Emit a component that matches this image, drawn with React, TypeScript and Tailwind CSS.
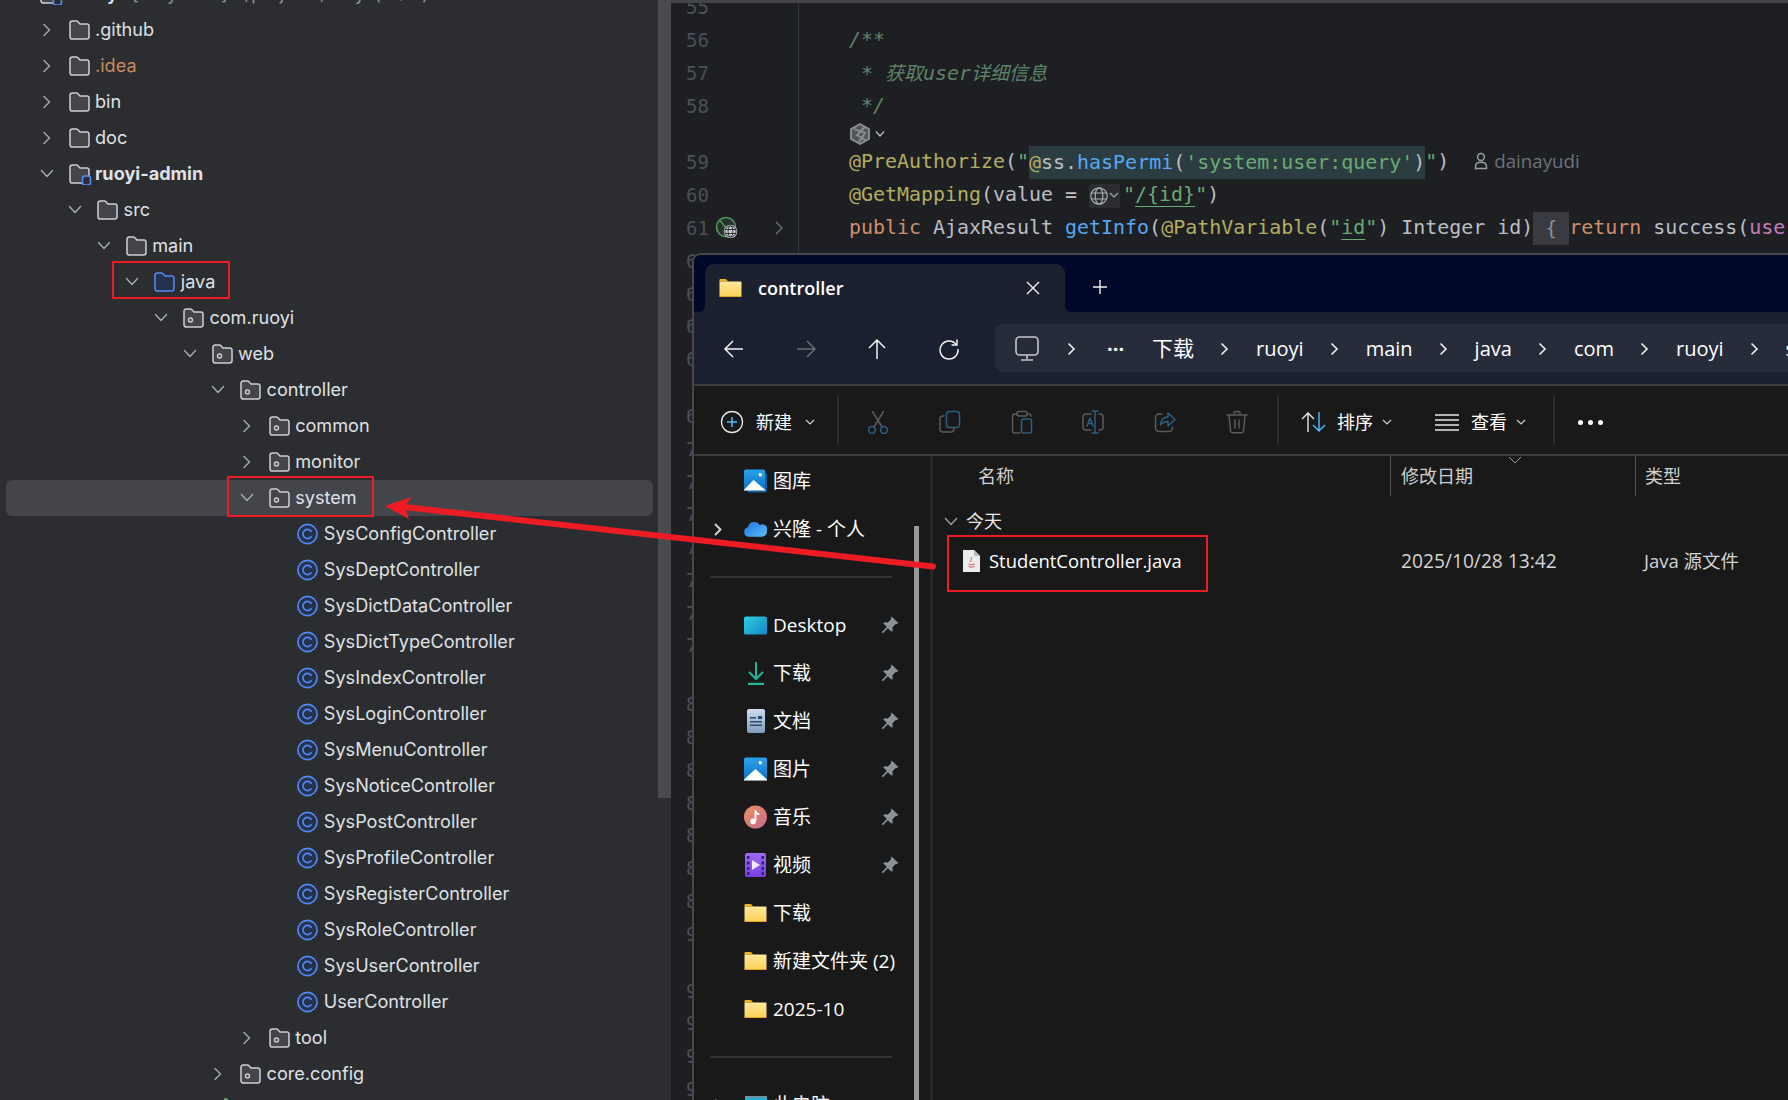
import React from "react";

const UI = "font-['Open_Sans','Noto_Sans_CJK_SC',sans-serif]";

type Kind = "folder" | "module" | "source" | "pkg" | "class" | "boot";
type Row = { name: string; level: number; kind: Kind; open?: boolean; color?: string; bold?: boolean; selected?: boolean };

const classes = [
  "SysConfigController", "SysDeptController", "SysDictDataController", "SysDictTypeController",
  "SysIndexController", "SysLoginController", "SysMenuController", "SysNoticeController",
  "SysPostController", "SysProfileController", "SysRegisterController", "SysRoleController",
  "SysUserController", "UserController",
];

const rows: Row[] = [
  { name: ".github", level: 0, kind: "folder", open: false },
  { name: ".idea", level: 0, kind: "folder", open: false, color: "text-[#c98a5e]" },
  { name: "bin", level: 0, kind: "folder", open: false },
  { name: "doc", level: 0, kind: "folder", open: false },
  { name: "ruoyi-admin", level: 0, kind: "module", open: true, bold: true },
  { name: "src", level: 1, kind: "folder", open: true },
  { name: "main", level: 2, kind: "folder", open: true },
  { name: "java", level: 3, kind: "source", open: true },
  { name: "com.ruoyi", level: 4, kind: "pkg", open: true },
  { name: "web", level: 5, kind: "pkg", open: true },
  { name: "controller", level: 6, kind: "pkg", open: true },
  { name: "common", level: 7, kind: "pkg", open: false },
  { name: "monitor", level: 7, kind: "pkg", open: false },
  { name: "system", level: 7, kind: "pkg", open: true, selected: true },
  ...classes.map((name) => ({ name, level: 8, kind: "class" as Kind })),
  { name: "tool", level: 7, kind: "pkg", open: false },
  { name: "core.config", level: 6, kind: "pkg", open: false },
  { name: "", level: 5, kind: "boot" },
];

const FOLDER = "M3.2 2h4.3c.5 0 .9.2 1.2.5L11 5h6.8A2.2 2.2 0 0 1 20 7.2v10.6a2.2 2.2 0 0 1-2.2 2.2H3.2A2.2 2.2 0 0 1 1 17.8V4.2A2.2 2.2 0 0 1 3.2 2z";

function TreeIcon({ kind }: { kind: Kind }) {
  if (kind === "boot")
    return (
      <svg width="22" height="24" viewBox="0 0 22 24" fill="none">
        <circle cx="9" cy="12" r="9" fill="#25324d" stroke="#548af7" strokeWidth="1.6" />
        <path d="M13 0 21 6v8h-8z" fill="#2b3a2e" stroke="#5fad65" strokeWidth="1.5" />
      </svg>
    );
  if (kind === "class")
    return (
      <svg width="21" height="22" viewBox="0 0 21 22" fill="none">
        <circle cx="10.5" cy="11" r="9.6" fill="#25324d" stroke="#548af7" strokeWidth="1.6" />
        <path d="M14.2 8.2a4.6 4.6 0 1 0 0 5.6" stroke="#548af7" strokeWidth="1.6" strokeLinecap="round" />
      </svg>
    );
  const blue = kind === "source";
  return (
    <svg width="24" height="22" viewBox="0 0 24 22" fill="none">
      <path d={FOLDER} fill={blue ? "#25324d" : "#43454a"} stroke={blue ? "#548af7" : "#ced0d6"} strokeWidth="1.5" />
      {kind === "pkg" && <circle cx="7.5" cy="13" r="2" stroke="#ced0d6" strokeWidth="1.4" />}
      {kind === "module" && <rect x="13.5" y="13" width="8" height="9" rx="2.5" fill="#2b2d30" stroke="#548af7" strokeWidth="1.6" />}
    </svg>
  );
}

function TreeChevron({ open }: { open: boolean }) {
  return (
    <svg width="16" height="14" viewBox="0 0 16 14" fill="none" stroke="#a8abb2" strokeWidth="1.4" strokeLinecap="round" strokeLinejoin="round">
      {open ? <path d="M2.5 3.5 8 9.5l5.5-6" /> : <path d="M5 1.5 10.5 7 5 12.5" />}
    </svg>
  );
}

function TreeRow({ r }: { r: Row }) {
  return (
    <div
      className={`flex h-9 w-[647px] shrink-0 items-center rounded-md ${r.selected ? "bg-[#43454a]" : ""}`}
      style={{ paddingLeft: 32.5 + r.level * 28.6 }}
    >
      <div className="flex w-[16px] justify-center">{r.open !== undefined && <TreeChevron open={r.open} />}</div>
      <div className="ml-[14px] w-[26.5px]"><TreeIcon kind={r.kind} /></div>
      <span className={`whitespace-nowrap text-[18.1px] ${r.bold ? "font-bold" : ""} ${r.color ?? "text-[#dfe1e5]"}`}>{r.name}</span>
    </div>
  );
}

const Y = "text-[#b3ae60]";
const G = "text-[#6aab73]";
const B = "text-[#56a8f5]";
const O = "text-[#cf8e6d]";
const C = "text-[#5f826b]";

function Line({ n, children, extra }: { n?: number; children?: React.ReactNode; extra?: React.ReactNode }) {
  return (
    <div className="flex h-[32.8px] shrink-0 items-center">
      <div className="flex h-full w-[128px] shrink-0 items-center border-r border-[#313438] pl-[15px] text-[19px] text-[#4b5059]">
        <span className="w-[33px]">{n}</span>
        {extra}
      </div>
      <div className="whitespace-pre pl-[50px] text-[#bcbec4]">{children}</div>
    </div>
  );
}

function Spacer({ h, children }: { h: string; children?: React.ReactNode }) {
  return (
    <div className={`flex shrink-0 ${h}`}>
      <div className="h-full w-[128px] shrink-0 border-r border-[#313438]" />
      {children}
    </div>
  );
}

function Editor() {
  const after = [62, 63, 64, 65];
  const b = [69, 70, 71, 72, 73, 74, 75, 76];
  const c = [80, 81, 82, 83, 84, 85, 86, 90];
  const d = [91, 92, 93, 94];
  const Nums = ({ list }: { list: number[] }) => <>{list.map((n) => <Line key={n} n={n} />)}</>;
  return (
    <div className="h-full flex-1 overflow-hidden border-t-[3px] border-[#43454a] bg-[#1e1f22] font-['DejaVu_Sans_Mono','Noto_Sans_CJK_SC',monospace] text-[19.95px]">
      <div className="-mt-[12px] flex flex-col">
        <Line n={55} />
        <Line n={56}><span className={`${C} italic`}>/**</span></Line>
        <Line n={57}><span className={`${C} italic`}> * <span className="font-['Noto_Sans_CJK_SC',sans-serif] text-[19px]">获取</span>user<span className="font-['Noto_Sans_CJK_SC',sans-serif] text-[19px]">详细信息</span></span></Line>
        <Line n={58}><span className={`${C} italic`}> */</span></Line>
        <Spacer h="h-[24px]">
          <div className="flex items-center gap-[4px] pl-[50px]">
            <svg width="22" height="24" viewBox="0 0 22 24" fill="none" stroke="#8e9196" strokeWidth="1.8">
              <path d="M11 2 20 7v10l-9 5-9-5V7z" fill="#55575b" />
              <path d="M5 7l11 4-6 9M16 5 8 13l8 5" />
            </svg>
            <svg width="10" height="8" viewBox="0 0 10 8" fill="none" stroke="#bcbec4" strokeWidth="1.2"><path d="M1 1.5 5 6l4-4.5" /></svg>
          </div>
        </Spacer>
        <Line n={59}>
          <span className={Y}>@PreAuthorize</span>(<span className={G}>"</span>
          <span className="inline-block h-[33px] bg-[#2b3d40] align-middle leading-[33px]"><span className={Y}>@</span>ss.<span className={B}>hasPermi</span>(<span className={G}>'system:user:query'</span>)</span>
          <span className={G}>"</span>)
          <span className="relative -top-[2px] ml-[25px] inline-flex items-center gap-[6px] align-middle font-['Open_Sans',sans-serif] text-[18.7px] text-[#6f7279]">
            <svg width="14" height="18" viewBox="0 0 14 18" fill="none" stroke="#9a9da3" strokeWidth="1.5"><circle cx="7" cy="5" r="3.4" /><path d="M1.5 16.5v-2c0-2.5 2-4.2 5.5-4.2s5.5 1.7 5.5 4.2v2z" /></svg>
            dainayudi
          </span>
        </Line>
        <Line n={60}>
          <span className={Y}>@GetMapping</span>(value = <span className="inline-flex h-[24px] w-[31px] items-center rounded-[3px] bg-[#2b2d30] align-middle">
            <svg width="20" height="20" viewBox="0 0 20 20" fill="none" stroke="#a8abb2" strokeWidth="1.2"><circle cx="10" cy="10" r="8.2" /><ellipse cx="10" cy="10" rx="3.8" ry="8.2" /><path d="M2 7h16M2 13h16" /></svg>
            <svg width="10" height="7" viewBox="0 0 10 7" fill="none" stroke="#a8abb2" strokeWidth="1.2"><path d="M1 1l4 4 4-4" /></svg>
          </span>
          <span className={`${G} ml-[3px]`}>"<span className="underline underline-offset-[5px]">/{"{id}"}</span>"</span>)
        </Line>
        <Line
          n={61}
          extra={
            <>
              <span className="relative -ml-[4px] block h-[24px] w-[24px]">
                <svg width="24" height="24" viewBox="0 0 24 24" fill="none">
                  <circle cx="11" cy="11" r="9.5" stroke="#4e9a5b" strokeWidth="1.6" fill="#26332a" />
                  <path d="M5 4.5 16 18" stroke="#4e9a5b" strokeWidth="1.5" />
                  <circle cx="15.5" cy="15.5" r="6.8" fill="#c9ccd1" />
                  <g stroke="#26282c" strokeWidth="0.9" fill="none"><circle cx="15.5" cy="15.5" r="5.6" /><ellipse cx="15.5" cy="15.5" rx="2.4" ry="5.6" /><path d="M10 13.5h11M10 17.5h11" /></g>
                </svg>
              </span>
              <svg className="ml-[35px]" width="10" height="16" viewBox="0 0 10 16" fill="none" stroke="#6f7279" strokeWidth="1.3"><path d="M2 2l6 6-6 6" /></svg>
            </>
          }
        >
          <span className={O}>public</span> AjaxResult <span className={B}>getInfo</span>(<span className={Y}>@PathVariable</span>(<span className={G}>"<span className="underline underline-offset-[5px]">id</span>"</span>) Integer id)<span className="inline-block h-[33px] w-[36px] bg-[#393b40] text-center align-middle leading-[33px] text-[#8e9196]">{"{"}</span><span className={O}>return</span> success(<span className="text-[#c77dbb]">user</span>
        </Line>
        <Nums list={after} />
        <Spacer h="h-[24px]" />
        <Nums list={b} />
        <Spacer h="h-[26px]" />
        <Nums list={c} />
        <Spacer h="h-[24px]" />
        <Nums list={d} />
      </div>
    </div>
  );
}

function YellowFolder() {
  return (
    <svg width="23" height="18" viewBox="0 0 22 18">
      <defs>
        <linearGradient id="fy" x1="0" y1="0" x2="0" y2="1"><stop offset="0" stopColor="#ffe99b" /><stop offset="1" stopColor="#fccf55" /></linearGradient>
      </defs>
      <path d="M0 1.2C0 .5.5 0 1.2 0h5.2l2.4 2.4H0z" fill="#f5b21c" />
      <path d="M0 2.6h21a1 1 0 0 1 1 1V17a1 1 0 0 1-1 1H1a1 1 0 0 1-1-1z" fill="url(#fy)" />
      <path d="M0 17h22v.2a.8.8 0 0 1-.8.8H.8a.8.8 0 0 1-.8-.8z" fill="#e5a52a" />
    </svg>
  );
}

function Pin() {
  return (
    <svg width="18" height="18" viewBox="0 0 16 16" fill="#8b9298">
      <path d="M9.7.6 15.4 6.3 13.9 7.4 13 7.1 10.2 10l.2 3-1 1-3.2-3.2L1.6 15.4.6 14.4l4.6-4.6L2 6.6l1-1 3 .2L8.9 3l-.3-.9z" />
    </svg>
  );
}

function NavIcon({ name }: { name: string }) {
  const iconProps = { width: 24, height: 24, viewBox: "0 0 24 24", fill: "none", strokeWidth: 1.5, strokeLinecap: "round" as const, strokeLinejoin: "round" as const };
  const dark = "#5b5b5b";
  const teal = "#2c5f80";
  switch (name) {
    case "cut":
      return (
        <svg {...iconProps}><path d="M6.5 1.5 16 17M17.5 1.5 8 17" stroke={dark} /><circle cx="6" cy="20" r="3.4" stroke={teal} /><circle cx="18" cy="20" r="3.4" stroke={teal} /></svg>
      );
    case "copy":
      return (
        <svg {...iconProps}><rect x="8.5" y="1.5" width="13" height="16" rx="3" stroke={teal} /><path d="M6 6H5a3 3 0 0 0-3 3v10a3 3 0 0 0 3 3h8a3 3 0 0 0 3-3v-1" stroke={dark} /></svg>
      );
    case "paste":
      return (
        <svg {...iconProps}><path d="M7 4H5a2.5 2.5 0 0 0-2.5 2.5V21A2.5 2.5 0 0 0 5 23h5M17 4h2a2.5 2.5 0 0 1 2 2" stroke={dark} /><rect x="7" y="1.5" width="10" height="4.5" rx="1.5" stroke={dark} /><rect x="11.5" y="9" width="10" height="14" rx="2" stroke={teal} /></svg>
      );
    case "rename":
      return (
        <svg {...iconProps}><path d="M10 4H5a3 3 0 0 0-3 3v10a3 3 0 0 0 3 3h5M18 4h1a3 3 0 0 1 3 3v10a3 3 0 0 1-3 3h-1" stroke={dark} /><path d="M14 1v22M11 1h6M11 23h6" stroke={teal} /><path d="m6 16 3-8 3 8M7 13.5h4" stroke={teal} /></svg>
      );
    case "share":
      return (
        <svg {...iconProps}><path d="M9 4H6a3.5 3.5 0 0 0-3.5 3.5V18A3.5 3.5 0 0 0 6 21.5h10a3.5 3.5 0 0 0 3.5-3.5v-1" stroke={dark} /><path d="M15 3v4c-5 0-7 3-7.5 8 2-3 4.5-3.5 7.5-3.5V16l7-6.500z" stroke={teal} /></svg>
      );
    case "trash":
      return (
        <svg {...iconProps}><path d="M2 5h20M9 5V3a1.5 1.5 0 0 1 1.5-1.5h3A1.5 1.5 0 0 1 15 3v2M4 5l1.5 16a2 2 0 0 0 2 1.8h9a2 2 0 0 0 2-1.8L20 5M10 10v8M14 10v8" stroke={dark} /></svg>
      );
    default:
      return null;
  }
}

function MiniChevron() {
  return <svg className="shrink-0" width="10" height="7" viewBox="0 0 10 7" fill="none" stroke="#cfcfcf" strokeWidth="1.2"><path d="M1 1l4 4 4-4" /></svg>;
}

function Crumb({ text, cjk }: { text: string; cjk?: boolean }) {
  return (
    <>
      <span className={`whitespace-nowrap ${cjk ? "text-[21px]" : ""}`}>{text}</span>
      <svg className="ml-[26px] mr-[27px] shrink-0" width="9" height="14" viewBox="0 0 9 14" fill="none" stroke="#f0f0f0" strokeWidth="1.6"><path d="M1.5 1.5 7 7l-5.5 5.5" /></svg>
    </>
  );
}

function SideRow({ icon, label, pin, chevron }: { icon: React.ReactNode; label: string; pin?: boolean; chevron?: boolean }) {
  return (
    <div className="flex h-12 shrink-0 items-center">
      <div className="flex w-[50px] shrink-0 pl-[19px]">
        {chevron && <svg width="10" height="15" viewBox="0 0 10 15" fill="none" stroke="#d0d0d0" strokeWidth="2"><path d="M2 2l5.5 5.5L2 13" /></svg>}
      </div>
      <div className="flex w-[23px] shrink-0 justify-center">{icon}</div>
      <span className="ml-[6px] whitespace-nowrap text-[19px] text-white">{label}</span>
      <div className="flex-1" />
      {pin && <div className="mr-[31px]"><Pin /></div>}
    </div>
  );
}

function SideSep() {
  return (
    <div className="flex h-12 shrink-0 items-center pl-[16px]">
      <div className="h-[2px] w-[182px] bg-[#333333]" />
    </div>
  );
}

function Explorer() {
  return (
    <div className={`absolute bottom-0 left-[692px] right-0 top-[253px] overflow-hidden rounded-tl-[9px] border-l-2 border-t-2 border-[#484848] bg-[#191919] ${UI}`}>
      <div className="flex h-[57px] bg-[#1c2130]">
        <div className="w-[11px] rounded-br-[6px] bg-[#01082a]" />
        <div className="w-[360px] bg-[#01082a] pt-[9px]">
          <div className="flex h-[48px] items-center rounded-t-[9px] bg-[#1c2130] pl-[14px]">
            <YellowFolder />
            <span className="ml-[16px] text-[18px] font-semibold text-white">controller</span>
            <div className="flex-1" />
            <svg className="mr-[25px]" width="14" height="14" viewBox="0 0 14 14" stroke="#f2f2f2" strokeWidth="1.4"><path d="M1 1l12 12M13 1 1 13" /></svg>
          </div>
        </div>
        <div className="flex flex-1 items-center rounded-bl-[6px] bg-[#01082a] pl-[27px] pt-[7px]">
          <svg width="16" height="16" viewBox="0 0 16 16" stroke="#f2f2f2" strokeWidth="1.4"><path d="M8 1v14M1 8h14" /></svg>
        </div>
      </div>

      <div className="flex h-[72px] items-center bg-[#1b2030]">
        <div className="flex w-[301px] shrink-0 items-center pl-[28px] pt-[1px]">
          <svg width="24" height="22" viewBox="0 0 24 22" fill="none" stroke="#f2f2f2" strokeWidth="1.5"><path d="M21 11H3M11 3l-8 8 8 8" /></svg>
          <svg className="ml-[48px]" width="24" height="22" viewBox="0 0 24 22" fill="none" stroke="#6a6d76" strokeWidth="1.5"><path d="M3 11h18M13 3l8 8-8 8" /></svg>
          <svg className="ml-[48px]" width="22" height="24" viewBox="0 0 22 24" fill="none" stroke="#f2f2f2" strokeWidth="1.5"><path d="M11 22V3M3 11l8-8 8 8" /></svg>
          <svg className="ml-[50px]" width="22" height="22" viewBox="0 0 22 22" fill="none" stroke="#f2f2f2" strokeWidth="1.5"><path d="M18.5 7A9 9 0 1 0 20 11" /><path d="M13.5 7h5.5V1.5" /></svg>
        </div>
        <div className="flex h-[48px] flex-1 items-center overflow-hidden rounded-l-[8px] bg-[#272c3a] pl-[20px] pt-[2px] text-[20px] text-white">
          <svg className="shrink-0" width="24" height="26" viewBox="0 0 24 26" fill="none" stroke="#c6c8cc" strokeWidth="1.6"><rect x="1" y="1" width="22" height="18" rx="3.5" /><path d="M12 19v4M6 24h12" /></svg>
          <svg className="ml-[28px] mr-[31px] shrink-0" width="9" height="14" viewBox="0 0 9 14" fill="none" stroke="#f0f0f0" strokeWidth="1.6"><path d="M1.5 1.5 7 7l-5.5 5.5" /></svg>
          <span className="mr-[28px] whitespace-nowrap font-bold leading-none">···</span>
          <Crumb text="下载" cjk />
          <Crumb text="ruoyi" />
          <Crumb text="main" />
          <Crumb text="java" />
          <Crumb text="com" />
          <Crumb text="ruoyi" />
          <span>system</span>
        </div>
      </div>

      <div className="h-[2px] bg-[#3c3c3c]" />

      <div className="flex h-[68px] items-center bg-[#191919] pt-[4px] text-[18px] text-white">
        <div className="flex w-[143px] shrink-0 items-center pl-[26px]">
          <svg width="24" height="24" viewBox="0 0 24 24" fill="none"><circle cx="12" cy="12" r="10.5" stroke="#e8e8e8" strokeWidth="1.3" /><path d="M12 7v10M7 12h10" stroke="#4cc2ff" strokeWidth="1.5" /></svg>
          <span className="ml-[12px] whitespace-nowrap">新建</span>
          <span className="ml-[13px]"><MiniChevron /></span>
        </div>
        <div className="-mt-[4px] h-[48px] w-[2px] bg-[#2d2d2d]" />
        <div className="flex w-[438px] shrink-0 justify-between pl-[27px] pr-[28px]">
          {["cut", "copy", "paste", "rename", "share", "trash"].map((n) => <NavIcon key={n} name={n} />)}
        </div>
        <div className="-mt-[4px] h-[48px] w-[2px] bg-[#2d2d2d]" />
        <div className="flex w-[156px] shrink-0 items-center pl-[22px]">
          <svg width="26" height="22" viewBox="0 0 26 22" fill="none" strokeWidth="1.4"><path d="M7 21V2M1 8l6-6 6 6" stroke="#e8e8e8" /><path d="M18 1v19M12 14l6 6 6-6" stroke="#4cc2ff" /></svg>
          <span className="ml-[10px] whitespace-nowrap">排序</span>
          <span className="ml-[9px]"><MiniChevron /></span>
        </div>
        <div className="flex w-[118px] shrink-0 items-center">
          <svg width="24" height="18" viewBox="0 0 24 18" fill="none" stroke="#e8e8e8" strokeWidth="1.4"><path d="M0 2h24M0 7h24M0 12h24M0 17h24" /></svg>
          <span className="ml-[12px] whitespace-nowrap">查看</span>
          <span className="ml-[9px]"><MiniChevron /></span>
        </div>
        <div className="-mt-[4px] h-[48px] w-[2px] bg-[#2d2d2d]" />
        <div className="flex gap-[5px] pl-[23px]">
          <span className="h-[5px] w-[5px] rounded-full bg-white" />
          <span className="h-[5px] w-[5px] rounded-full bg-white" />
          <span className="h-[5px] w-[5px] rounded-full bg-white" />
        </div>
      </div>

      <div className="h-[2px] bg-[#3c3c3c]" />

      <div className="flex h-[700px]">
        <div className="relative flex w-[236px] shrink-0 flex-col pt-[1px]">
          <SideRow label="图库" icon={<Pic stack />} />
          <SideRow label="兴隆 - 个人" chevron icon={
            <svg width="24" height="16" viewBox="0 0 24 16"><defs><linearGradient id="od" x1="0" y1="0" x2="1" y2="1"><stop offset="0" stopColor="#1a73e0" /><stop offset="1" stopColor="#5cc0f5" /></linearGradient></defs><path d="M5 16a5 5 0 0 1-.8-9.9A6.5 6.5 0 0 1 16.3 4 5 5 0 0 1 23.8 10 5 5 0 0 1 19 16z" fill="url(#od)" /></svg>
          } />
          <SideSep />
          <SideRow label="Desktop" pin icon={
            <svg width="24" height="19" viewBox="0 0 24 19"><defs><linearGradient id="dk" x1="0" y1="0" x2="1" y2="1"><stop offset="0" stopColor="#2fd0de" /><stop offset="1" stopColor="#1387c9" /></linearGradient></defs><rect width="24" height="19" rx="2" fill="url(#dk)" /></svg>
          } />
          <SideRow label="下载" pin icon={
            <svg width="18" height="24" viewBox="0 0 18 24" fill="none" stroke="#22b59a" strokeWidth="2"><path d="M9 1v16M2 11l7 7 7-7" /><path d="M1 23h16" strokeWidth="2.5" /></svg>
          } />
          <SideRow label="文档" pin icon={
            <svg width="18" height="24" viewBox="0 0 18 24"><defs><linearGradient id="dc" x1="0" y1="0" x2="0" y2="1"><stop offset="0" stopColor="#cfdcec" /><stop offset="1" stopColor="#7f9dbd" /></linearGradient></defs><rect width="18" height="24" rx="2" fill="url(#dc)" /><path d="M3 8h6v1.5H3zM3 12h12v1.5H3zM3 15.5h12V17H3zM11 7h4v3h-4z" fill="#2c4a6b" /></svg>
          } />
          <SideRow label="图片" pin icon={<Pic />} />
          <SideRow label="音乐" pin icon={
            <svg width="24" height="24" viewBox="0 0 24 24"><defs><linearGradient id="ms" x1="0" y1="0" x2="1" y2="1"><stop offset="0" stopColor="#f0935c" /><stop offset="1" stopColor="#c4688f" /></linearGradient></defs><circle cx="12" cy="12" r="12" fill="url(#ms)" /><circle cx="9.5" cy="16.5" r="3" fill="#fff" /><path d="M11 16V5h1.8c.3 2 1.5 3 3.2 3v2c-1.3 0-2.3-.5-3-1.2V16z" fill="#fff" /></svg>
          } />
          <SideRow label="视频" pin icon={
            <svg width="21" height="24" viewBox="0 0 21 24"><defs><linearGradient id="vd" x1="0" y1="0" x2="0" y2="1"><stop offset="0" stopColor="#9b6cf0" /><stop offset="1" stopColor="#7a3fe0" /></linearGradient></defs><rect width="21" height="24" rx="2" fill="url(#vd)" /><path d="M2 3h2.5v3H2zM2 8.5h2.5v3H2zM2 14h2.5v3H2zM2 19h2.5v3H2zM16.5 3H19v3h-2.5zM16.5 8.5H19v3h-2.5zM16.5 14H19v3h-2.5zM16.5 19H19v3h-2.5z" fill="#3a1d80" /><path d="M7 7l8 5-8 5z" fill="#efe8ff" /></svg>
          } />
          <SideRow label="下载" icon={<YellowFolder />} />
          <SideRow label="新建文件夹 (2)" icon={<YellowFolder />} />
          <SideRow label="2025-10" icon={<YellowFolder />} />
          <SideSep />
          <SideRow label="此电脑" chevron icon={
            <svg width="22" height="18" viewBox="0 0 22 18"><rect width="22" height="18" rx="2" fill="#23b4d2" /><rect width="22" height="1.5" fill="#7d8c95" /></svg>
          } />
          <div className="absolute bottom-0 left-[220px] top-[70px] w-[5px] bg-[#9a9a9a]" />
        </div>
        <div className="w-[3px] shrink-0 bg-[#282828]" />
        <div className="flex flex-1 flex-col">
          <div className="flex h-[40px] text-[18px] text-[#d0d0d0]">
            <div className="flex w-[457px] shrink-0 items-center pl-[45px]">名称</div>
            <div className="relative flex w-[245px] shrink-0 items-center border-l border-[#555555] pl-[10px]">
              修改日期
              <svg className="absolute left-[117px] top-[0px]" width="14" height="8" viewBox="0 0 14 8" fill="none" stroke="#9a9a9a" strokeWidth="1"><path d="M1 1l6 6 6-6" /></svg>
            </div>
            <div className="flex flex-1 items-center border-l border-[#555555] pl-[9px]">类型</div>
          </div>
          <div className="flex h-[42px] items-center pl-[11px] pt-[9px] text-[18px] text-[#e8e8e8]">
            <svg width="14" height="9" viewBox="0 0 14 9" fill="none" stroke="#a0a0a0" strokeWidth="1.3"><path d="M1 1l6 6.5L13 1" /></svg>
            <span className="ml-[8px]">今天</span>
          </div>
          <div className="flex h-[46px] items-center text-[18px]">
            <div className="flex w-[457px] shrink-0 items-center pl-[30px]">
              <svg width="17" height="22" viewBox="0 0 17 22"><path d="M0 0h11l6 6v16H0z" fill="#ececec" /><path d="M11 0l6 6h-6z" fill="#bdbdbd" /><path d="M8 7c1.5 2-1.5 3 0 5M5.5 14c2 .8 4 .8 6 0M5.5 16.5c2 .7 4 .7 6 0" stroke="#d9534f" strokeWidth="1" fill="none" /></svg>
              <span className="ml-[9px] text-[18.4px] text-white">StudentController.java</span>
            </div>
            <div className="w-[245px] shrink-0 pl-[11px] text-[19.2px] text-[#d4d4d4]">2025/10/28 13:42</div>
            <div className="pl-[9px] text-[18.5px] text-[#d4d4d4]">Java 源文件</div>
          </div>
        </div>
      </div>
    </div>
  );
}

function Pic({ stack }: { stack?: boolean }) {
  return (
    <svg width="24" height="24" viewBox="0 0 24 24">
      <defs><linearGradient id="pc" x1="0" y1="0" x2="0" y2="1"><stop offset="0" stopColor="#2aa3ec" /><stop offset="1" stopColor="#0e6fc2" /></linearGradient></defs>
      {stack && <rect x="3" y="3" width="21" height="21" rx="2" fill="#155d9e" />}
      <rect width={stack ? 22 : 24} height={stack ? 22 : 24} rx="2" fill="url(#pc)" />
      <path d={stack ? "M0 21 10 11l12 10v1H0z" : "M0 23 12 12l12 11v1H0z"} fill="#fff" />
      <circle cx="17" cy="5.5" r="1.8" fill="#fff" />
    </svg>
  );
}

export default function App() {
  return (
    <div className="relative flex h-[1100px] w-[1788px] overflow-hidden bg-[#2b2d30]">
      <div className="flex w-[671px] shrink-0 font-['Inter','Noto_Sans_CJK_SC',sans-serif]">
        <div className="h-full w-[658px] overflow-hidden pl-[6px]">
          <div className="-mt-[24px] flex flex-col">
            <div className="flex h-9 w-[647px] shrink-0 items-center whitespace-nowrap pl-[34px] text-[18.1px] text-[#8e9196]">
              <div className="w-[38px]"><TreeIcon kind="module" /></div>
              <span className="font-semibold text-[#dfe1e5]">ruoyi</span>
              <span className="ml-[10px]">[ruoyi-vue] ~/projects/ruoyi (main)</span>
            </div>
            {rows.map((r) => <TreeRow key={r.name + r.level} r={r} />)}
          </div>
        </div>
        <div className="h-[798px] w-[13px] bg-[#4a4b4d]" />
      </div>

      <Editor />
      <Explorer />

      {/* annotations drawn over the screenshot */}
      <div className="pointer-events-none absolute left-[112px] top-[261px] h-[38px] w-[118px] border-2 border-[#ed1c24]" />
      <div className="pointer-events-none absolute left-[227px] top-[476px] h-[41px] w-[147px] border-2 border-[#ed1c24]" />
      <div className="pointer-events-none absolute left-[947px] top-[535px] h-[57px] w-[261px] border-2 border-[#ed1c24]" />
      <svg className="pointer-events-none absolute left-0 top-0" width="1788" height="1100" fill="none">
        <path d="M400 506.5 L933 566.5" stroke="#ed1c24" strokeWidth="6" strokeLinecap="round" />
        <path d="M385 506 L411 497 L405 507 L409 519 Z" fill="#ed1c24" />
      </svg>
    </div>
  );
}
